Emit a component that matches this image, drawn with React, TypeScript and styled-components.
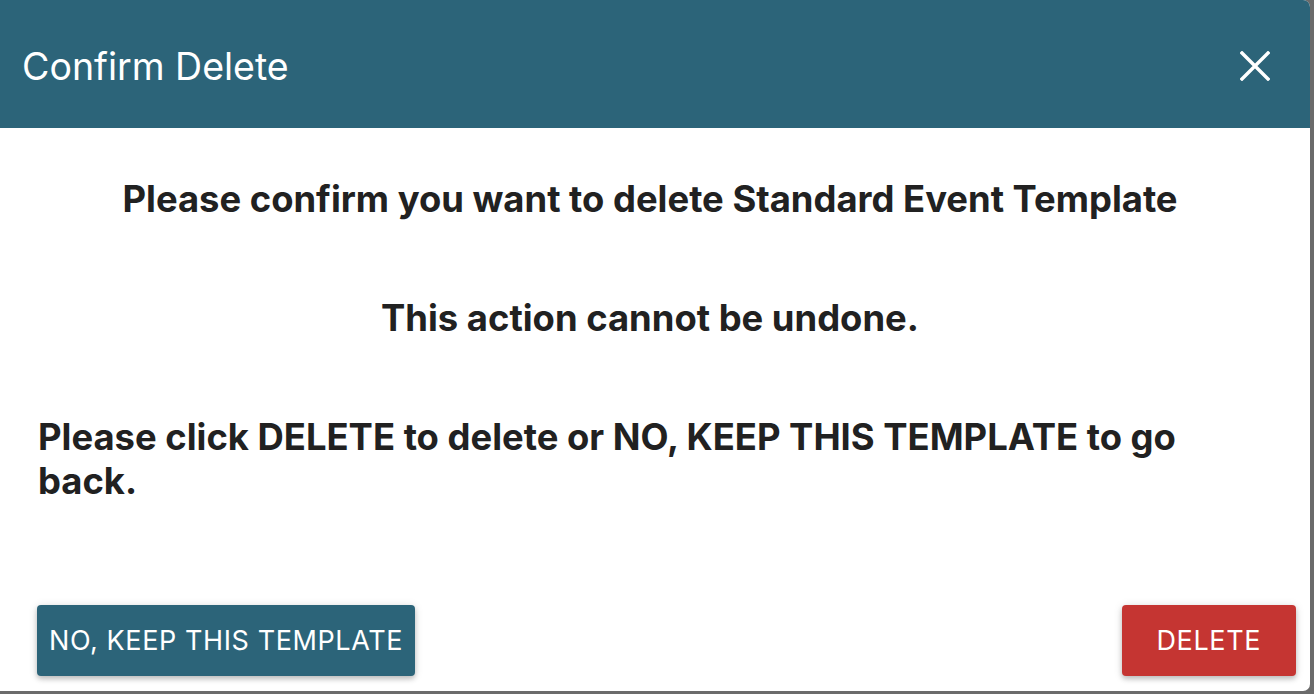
import React from "react";
import styled, { createGlobalStyle } from "styled-components";

const GlobalStyle = createGlobalStyle`
  html, body {
    margin: 0;
    padding: 0;
    background: #6b6b6b;
    font-family: Inter, "Noto Sans", sans-serif;
  }
`;

const Backdrop = styled.div`
  width: 1314px;
  height: 694px;
  padding: 0 4px 3px 0;
  box-sizing: border-box;
  background: #6b6b6b;
`;

const Dialog = styled.div`
  height: 100%;
  display: flex;
  flex-direction: column;
  background: #fff;
  border-radius: 0 7px 7px 0;
  overflow: hidden;
`;

const Header = styled.div`
  height: 128px;
  flex-shrink: 0;
  display: flex;
  align-items: center;
  justify-content: space-between;
  padding: 4px 40px 0 22px;
  box-sizing: border-box;
  background: #2c6479;
  color: #fff;
`;

const Title = styled.h1`
  margin: 0;
  font-size: 37.5px;
  font-weight: 400;
`;

const CloseButton = styled.button`
  border: 0;
  padding: 0;
  background: none;
  display: flex;
  cursor: pointer;
`;

const Body = styled.div`
  flex: 1;
  display: flex;
  flex-direction: column;
  padding: 49px 48px 0 38px;
  color: #212121;
`;

const Message = styled.p<{ center?: boolean }>`
  margin: 0 0 ${(p) => (p.center ? "75px" : "0")};
  font-size: 36.4px;
  font-weight: 700;
  line-height: 44px;
  text-align: ${(p) => (p.center ? "center" : "left")};
`;

const Footer = styled.div`
  display: flex;
  justify-content: space-between;
  align-items: center;
  padding: 0 14px 15px 37px;
`;

const ActionButton = styled.button<{ danger?: boolean }>`
  height: 71px;
  padding: 0 ${(p) => (p.danger ? "35px" : "12px")};
  border: 0;
  border-radius: 4px;
  background: ${(p) => (p.danger ? "#c53532" : "#2c6479")};
  color: #fff;
  font-family: Inter, "Noto Sans", sans-serif;
  font-size: 27px;
  font-weight: 400;
  letter-spacing: 0.6px;
  text-transform: uppercase;
  box-shadow: 0 3px 5px rgba(0, 0, 0, 0.2), 0 1px 10px rgba(0, 0, 0, 0.12);
  cursor: pointer;
`;

export default function App() {
  return (
    <>
      <GlobalStyle />
      <Backdrop>
        <Dialog>
          <Header>
            <Title>Confirm Delete</Title>
            <CloseButton aria-label="Close">
              <svg width="30" height="30" viewBox="0 0 30 30">
                <path d="M2 2 L28 28 M28 2 L2 28" stroke="#fff" strokeWidth="3.4" strokeLinecap="square" />
              </svg>
            </CloseButton>
          </Header>
          <Body>
            <Message center>Please confirm you want to delete Standard Event Template</Message>
            <Message center>This action cannot be undone.</Message>
            <Message>Please click DELETE to delete or NO, KEEP THIS TEMPLATE to go back.</Message>
          </Body>
          <Footer>
            <ActionButton>No, keep this template</ActionButton>
            <ActionButton danger>Delete</ActionButton>
          </Footer>
        </Dialog>
      </Backdrop>
    </>
  );
}
